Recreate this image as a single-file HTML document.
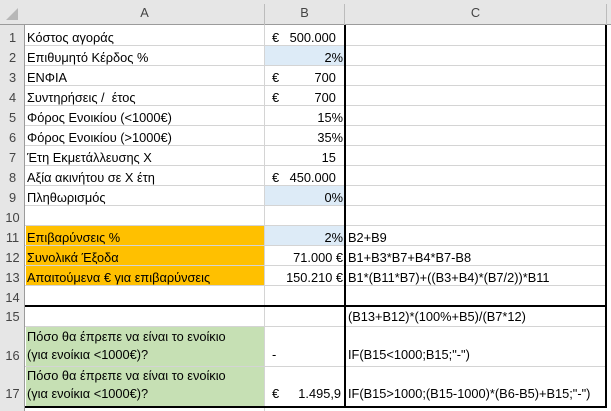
<!DOCTYPE html>
<html><head><meta charset="utf-8"><style>
*{margin:0;padding:0;box-sizing:border-box}
body{width:611px;height:411px;background:#fff;position:relative;overflow:hidden;font-family:"Liberation Sans","DejaVu Sans",sans-serif;font-size:12.8px;color:#000}
.a{position:absolute;white-space:nowrap}
.hl{position:absolute;height:1px;background:#d4d4d4}
.vl{position:absolute;width:1px;background:#d4d4d4}
.tk{position:absolute;background:#000}
</style></head><body>
<div class="a" style="left:0;top:0;width:611px;height:25px;background:#e6e6e6;border-bottom:1px solid #9b9b9b"></div>
<div class="a" style="left:0;top:25px;width:25px;height:386px;background:#e6e6e6;border-right:1px solid #9b9b9b"></div>
<svg class="a" style="left:4px;top:6px" width="16" height="16"><polygon points="14,2 14,14 2,14" fill="#b7b7b7"/></svg>
<div class="vl" style="left:264px;top:4px;height:21px;background:#bcbcbc"></div>
<div class="vl" style="left:344px;top:4px;height:21px;background:#bcbcbc"></div>
<div class="vl" style="left:606px;top:4px;height:21px;background:#bcbcbc"></div>
<div class="a" style="left:25px;top:5px;width:239px;text-align:center;color:#444">A</div>
<div class="a" style="left:265px;top:5px;width:79px;text-align:center;color:#444">B</div>
<div class="a" style="left:345px;top:5px;width:261px;text-align:center;color:#444">C</div>

<div class="a" style="left:265px;top:46px;width:79px;height:19px;background:#ddebf7"></div>
<div class="a" style="left:265px;top:186px;width:79px;height:19px;background:#ddebf7"></div>
<div class="a" style="left:265px;top:226px;width:79px;height:19px;background:#ddebf7"></div>
<div class="a" style="left:26px;top:226px;width:238px;height:59px;background:#ffc000"></div>
<div class="a" style="left:26px;top:327px;width:238px;height:80px;background:#c6e0b4"></div>

<div class="hl" style="left:25px;top:45px;width:581px"></div>
<div class="hl" style="left:25px;top:65px;width:581px"></div>
<div class="hl" style="left:25px;top:85px;width:581px"></div>
<div class="hl" style="left:25px;top:105px;width:581px"></div>
<div class="hl" style="left:25px;top:125px;width:581px"></div>
<div class="hl" style="left:25px;top:145px;width:581px"></div>
<div class="hl" style="left:25px;top:165px;width:581px"></div>
<div class="hl" style="left:25px;top:185px;width:581px"></div>
<div class="hl" style="left:25px;top:205px;width:581px"></div>
<div class="hl" style="left:25px;top:225px;width:581px"></div>
<div class="hl" style="left:25px;top:245px;width:581px"></div>
<div class="hl" style="left:25px;top:265px;width:581px"></div>
<div class="hl" style="left:25px;top:285px;width:581px"></div>
<div class="hl" style="left:25px;top:326px;width:581px"></div>
<div class="hl" style="left:25px;top:366px;width:581px"></div>
<div class="vl" style="left:264px;top:25px;height:386px"></div>

<div class="tk" style="left:344px;top:25px;width:2px;height:382px"></div>
<div class="tk" style="left:605px;top:25px;width:2px;height:382px"></div>
<div class="tk" style="left:25px;top:305px;width:582px;height:2px"></div>
<div class="tk" style="left:25px;top:406px;width:582px;height:2px"></div>

<div class="a" style="left:0;top:28px;width:25px;text-align:center;color:#444;line-height:20px">1<br>2<br>3<br>4<br>5<br>6<br>7<br>8<br>9<br>10<br>11<br>12<br>13<br>14</div>
<div class="a" style="left:0;top:309px;width:25px;text-align:center;color:#444">15</div>
<div class="a" style="left:0;top:348px;width:25px;text-align:center;color:#444">16</div>
<div class="a" style="left:0;top:386px;width:25px;text-align:center;color:#444">17</div>

<div class="a" style="left:27px;top:28px;line-height:20px">Κόστος αγοράς<br>Επιθυμητό Κέρδος %<br>ΕΝΦΙΑ<br>Συντηρήσεις /&nbsp; έτος<br>Φόρος Ενοικίου (&lt;1000€)<br>Φόρος Ενοικίου (&gt;1000€)<br>Έτη Εκμετάλλευσης Χ<br>Αξία ακινήτου σε Χ έτη<br>Πληθωρισμός<br><br>Επιβαρύνσεις %<br>Συνολικά Έξοδα<br>Απαιτούμενα € για επιβαρύνσεις</div>
<div class="a" style="left:27px;top:328px;line-height:18px">Πόσο θα έπρεπε να είναι το ενοίκιο<br>(για ενοίκια &lt;1000€)?</div>
<div class="a" style="left:27px;top:367px;line-height:18px">Πόσο θα έπρεπε να είναι το ενοίκιο<br>(για ενοίκια &lt;1000€)?</div>

<div class="a" style="left:272px;top:28px;line-height:20px">€<br><br>€<br>€<br><br><br><br>€</div>
<div class="a" style="left:265px;top:28px;width:78px;text-align:right;line-height:20px">500.000&nbsp;&nbsp;<br>2%<br>700&nbsp;&nbsp;<br>700&nbsp;&nbsp;<br>15%<br>35%<br>15&nbsp;&nbsp;<br>450.000&nbsp;&nbsp;<br>0%<br><br>2%<br>71.000 €<br>150.210 €</div>
<div class="a" style="left:272px;top:347px">-</div>
<div class="a" style="left:272px;top:386px">€</div>
<div class="a" style="left:265px;top:386px;width:76px;text-align:right">1.495,9</div>

<div class="a" style="left:348px;top:228px;line-height:20px">B2+B9<br>B1+B3*B7+B4*B7-B8<br>B1*(B11*B7)+((B3+B4)*(B7/2))*B11</div>
<div class="a" style="left:348px;top:309px">(B13+B12)*(100%+B5)/(B7*12)</div>
<div class="a" style="left:348px;top:347px">IF(B15&lt;1000;B15;"-")</div>
<div class="a" style="left:348px;top:386px">IF(B15&gt;1000;(B15-1000)*(B6-B5)+B15;"-")</div>
</body></html>
